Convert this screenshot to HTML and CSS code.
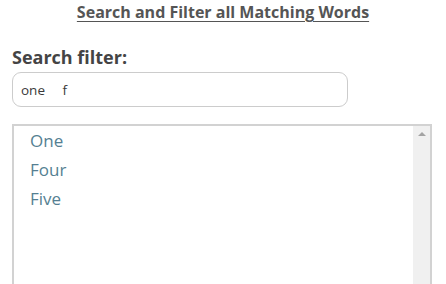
FILE: index.html
```html
<!DOCTYPE html>
<html lang="en">
<head>
    <meta charset="UTF-8">
    <title>Search and Filter</title>
    <link rel="stylesheet" href="styles.css">
</head>
<body>
    <div class="container">
        <h1 class="title">Search and Filter all Matching Words</h1>

        <label class="label" for="filtro">Search filter:</label>
        <input type="text" id="filtro" class="search" value="one     f">

        <div class="listbox">
            <ul class="words">
                <li>One</li>
                <li>Four</li>
                <li>Five</li>
            </ul>
            <div class="scrollbar">
                <span class="arrow"></span>
            </div>
        </div>
    </div>
</body>
</html>
```

FILE: styles.css
```css
* { margin: 0; padding: 0; box-sizing: border-box; }
body {
    font-family: "Open Sans", Arial, sans-serif;
    background: #fff;
    color: #444;
    overflow: hidden;
}
.container { padding: 0 12px; }
.title {
    font-size: 16px;
    font-weight: bold;
    color: #555;
    text-align: center;
    text-decoration: underline;
    text-underline-offset: 3px;
    line-height: 24px;
}
.label {
    display: block;
    font-size: 18px;
    font-weight: bold;
    color: #444;
    margin-top: 21px;
    line-height: 24px;
}
.search {
    display: block;
    width: 336px;
    height: 35px;
    margin-top: 3px;
    padding: 0 8px;
    font-family: inherit;
    font-size: 13.5px;
    color: #3a3a3a;
    border: 1px solid #ccc;
    border-radius: 9px;
    outline: none;
}
.listbox {
    display: flex;
    margin-top: 17px;
    width: 420px;
    height: 170px;
    border: 2px solid #d2d2d2;
}
.words {
    flex: 1;
    list-style: none;
    padding: 0 0 0 16px;
}
.words li {
    font-size: 17px;
    line-height: 29px;
    color: #557f92;
}
.scrollbar {
    width: 17px;
    background: #f0f0f0;
    display: flex;
    justify-content: center;
    padding-top: 6px;
}
.arrow {
    width: 0;
    height: 0;
    border-left: 4px solid transparent;
    border-right: 4px solid transparent;
    border-bottom: 4px solid #a3a3a3;
}
```
